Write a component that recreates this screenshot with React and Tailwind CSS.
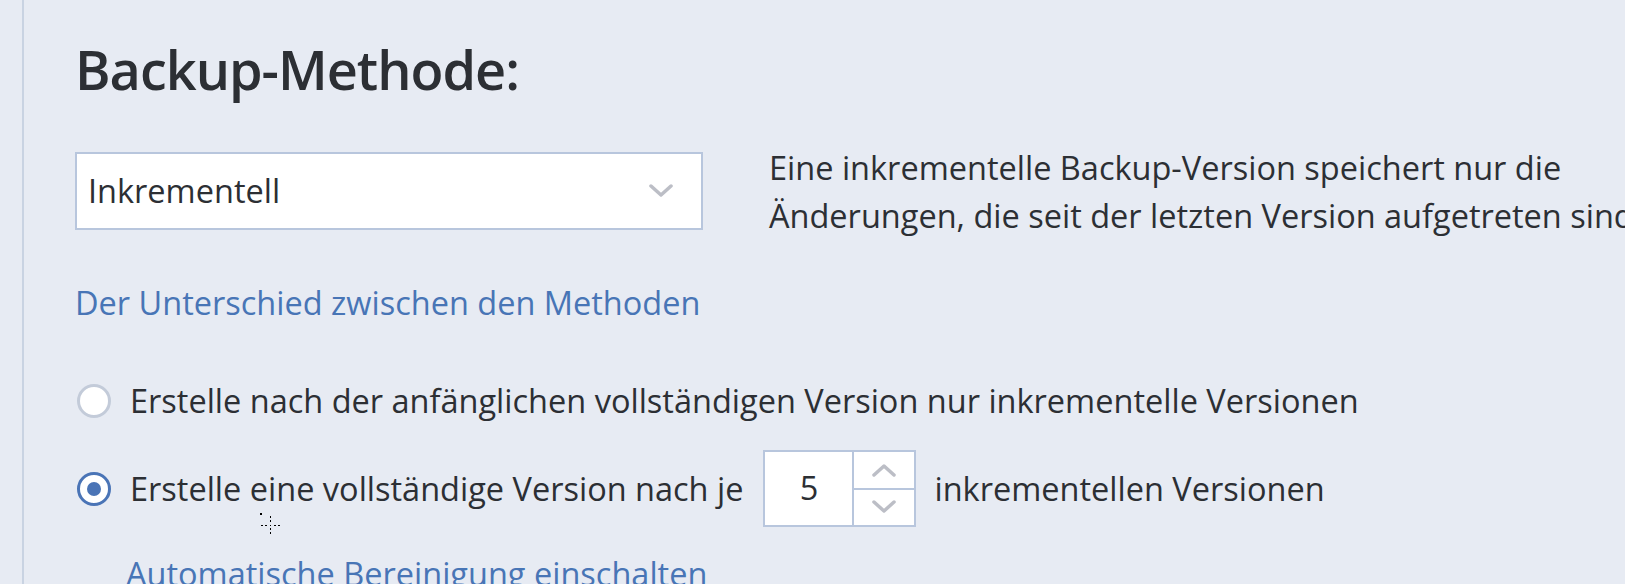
import { useState } from "react";

const font = { fontFamily: '"Open Sans", "Noto Sans", sans-serif' };

function Chevron({ up = false, className = "" }) {
  return (
    <svg width="24" height="14" viewBox="0 0 24 14" className={className}>
      <polyline
        points={up ? "2,12 12,3 22,12" : "2,2 12,11 22,2"}
        fill="none"
        stroke="#bcbec6"
        strokeWidth="3.5"
        strokeLinecap="round"
        strokeLinejoin="round"
      />
    </svg>
  );
}

function Radio({ checked }) {
  return checked ? (
    <div className="w-[34px] h-[34px] rounded-full border-[3px] border-[#4a74b6] bg-white flex items-center justify-center shrink-0">
      <div className="w-[14px] h-[14px] rounded-full bg-[#4a74b6]"></div>
    </div>
  ) : (
    <div className="w-[34px] h-[34px] rounded-full border-[3px] border-[#c3cbd9] bg-white shrink-0"></div>
  );
}

export default function App() {
  const [mode, setMode] = useState("every");
  const [count, setCount] = useState(5);

  return (
    <div className="w-full h-[584px] bg-[#e7ebf3] overflow-hidden flex text-[#2c2f34]" style={font}>
      <div className="w-[22px] shrink-0"></div>
      <div className="w-[2px] bg-[#c9d3e2] shrink-0"></div>
      <div className="relative flex-1 pl-[51px] pt-[42px] min-w-0">
        <h1 className="text-[54px] leading-none font-semibold tracking-[-1px] h-[54px]">Backup-Methode:</h1>

        <div className="flex mt-[48px]">
          <div className="mt-[8px] w-[628px] h-[78px] bg-white border-2 border-[#b8c6dd] flex items-center justify-between pl-[11px] pr-[28px] shrink-0">
            <span className="text-[32.5px]">Inkrementell</span>
            <Chevron />
          </div>
          <div className="ml-[66px] text-[32.5px] leading-[48px] whitespace-nowrap">
            <div>Eine inkrementelle Backup-Version speichert nur die</div>
            <div>Änderungen, die seit der letzten Version aufgetreten sind.</div>
          </div>
        </div>

        <div className="mt-[39px] text-[32.5px] leading-[48px] text-[#4875b6] cursor-pointer">
          Der Unterschied zwischen den Methoden
        </div>

        <div className="mt-[50px] flex items-center cursor-pointer" onClick={() => setMode("only")}>
          <div className="ml-[2px]">
            <Radio checked={mode === "only"} />
          </div>
          <span className="ml-[19px] text-[32.5px] leading-[48px] whitespace-nowrap">
            Erstelle nach der anfänglichen vollständigen Version nur inkrementelle Versionen
          </span>
        </div>

        <div className="mt-[25px] flex items-center h-[77px]">
          <div className="ml-[2px] cursor-pointer" onClick={() => setMode("every")}>
            <Radio checked={mode === "every"} />
          </div>
          <span className="ml-[19px] text-[32.5px] leading-[48px] whitespace-nowrap">
            Erstelle eine vollständige Version nach je
          </span>
          <div className="ml-[20px] flex h-[77px] border-2 border-[#b8c6dd] bg-white">
            <div className="w-[87px] flex items-center justify-center text-[32.5px]">{count}</div>
            <div className="w-[62px] flex flex-col border-l-2 border-[#b8c6dd]">
              <button
                className="flex-1 flex items-center justify-center border-b-2 border-[#b8c6dd]"
                onClick={() => setCount((c) => c + 1)}
              >
                <Chevron up />
              </button>
              <button
                className="flex-1 flex items-center justify-center"
                onClick={() => setCount((c) => (c > 1 ? c - 1 : c))}
              >
                <Chevron />
              </button>
            </div>
          </div>
          <span className="ml-[18px] text-[32.5px] leading-[48px] whitespace-nowrap">inkrementellen Versionen</span>
        </div>

        <div className="mt-[23px] ml-[51px] text-[32.5px] leading-[48px] text-[#4875b6] cursor-pointer">
          Automatische Bereinigung einschalten
        </div>

        {/* cursor */}
        <svg className="absolute left-[236px] top-[513px]" width="24" height="24" viewBox="0 0 24 24">
          <rect x="0" y="0" width="2" height="2" fill="#000" />
          <rect x="10" y="3" width="1" height="2" fill="#000" />
          <rect x="10" y="7" width="1" height="2" fill="#000" />
          <rect x="10" y="15" width="1" height="2" fill="#000" />
          <rect x="10" y="19" width="1" height="2" fill="#000" />
          <rect x="1" y="12" width="2" height="1" fill="#000" />
          <rect x="5" y="12" width="2" height="1" fill="#000" />
          <rect x="14" y="12" width="2" height="1" fill="#000" />
          <rect x="18" y="12" width="2" height="1" fill="#000" />
          <rect x="10" y="12" width="1" height="1" fill="#000" />
        </svg>
      </div>
    </div>
  );
}
